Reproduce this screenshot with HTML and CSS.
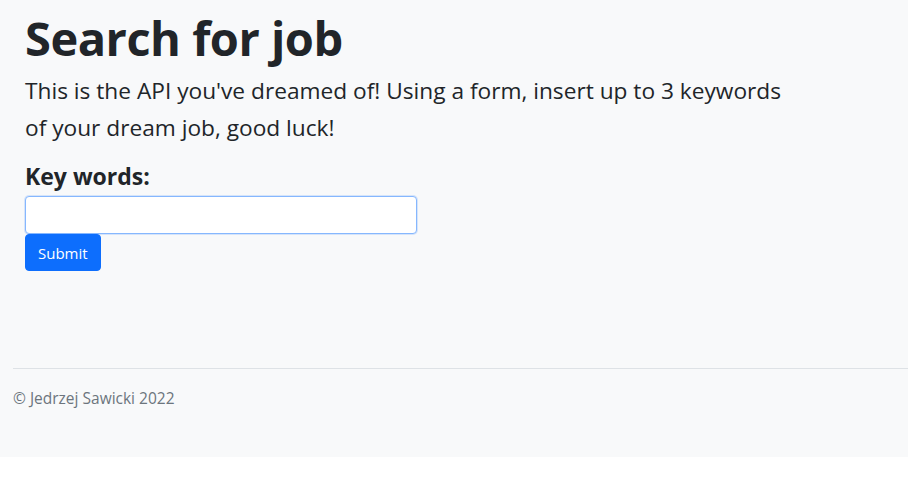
FILE: index.html
```html
<!DOCTYPE html>
<html lang="en">
<head>
<meta charset="utf-8">
<title>Search for job</title>
<link rel="stylesheet" href="styles.css">
</head>
<body>
<div class="page">
  <main class="main">
    <h1 class="title">Search for job</h1>
    <p class="lead">This is the API you've dreamed of! Using a form, insert up to 3 keywords of your dream job, good luck!</p>
    <form class="form">
      <label class="label" for="kw">Key words:</label>
      <input class="input" id="kw" type="text">
      <button class="btn" type="submit">Submit</button>
    </form>
  </main>
  <footer class="footer">
    <span class="copy">© Jedrzej Sawicki 2022</span>
  </footer>
</div>
</body>
</html>
```
FILE: styles.css
```css
* { box-sizing: border-box; }
html, body { margin: 0; padding: 0; }
body {
  background: #ffffff;
  font-family: "Open Sans", "Noto Sans", sans-serif;
  color: #212529;
}
.page {
  background: #f8f9fa;
  height: 457px;
  display: flex;
  flex-direction: column;
}
.main {
  padding: 4px 25px 0 25px;
}
.title {
  margin: 0;
  font-size: 47px;
  font-weight: 700;
  line-height: 68px;
  letter-spacing: -0.5px;
}
.lead {
  margin: 0;
  width: 772px;
  font-size: 22.7px;
  line-height: 37px;
  font-weight: 400;
}
.form {
  display: flex;
  flex-direction: column;
  align-items: flex-start;
  margin-top: 14px;
}
.label {
  font-size: 23px;
  font-weight: 700;
  line-height: 32px;
  margin-bottom: 4px;
}
.input {
  width: 392px;
  height: 38px;
  border: 1px solid #86b7fe;
  border-radius: 4px;
  background: #fff;
  box-shadow: 0 0 0 1px rgba(13,110,253,0.15);
  outline: none;
  font: inherit;
}
.btn {
  height: 37px;
  padding: 0 12px;
  background: #0d6efd;
  color: #fff;
  border: 1px solid #0d6efd;
  border-radius: 4px;
  font-family: inherit;
  font-size: 15px;
  cursor: pointer;
}
.footer {
  margin-top: 97px;
  margin-left: 13px;
  border-top: 1px solid #dee2e6;
  padding-top: 18px;
}
.copy {
  font-size: 15.5px;
  color: #6c757d;
  line-height: 22px;
}
```
